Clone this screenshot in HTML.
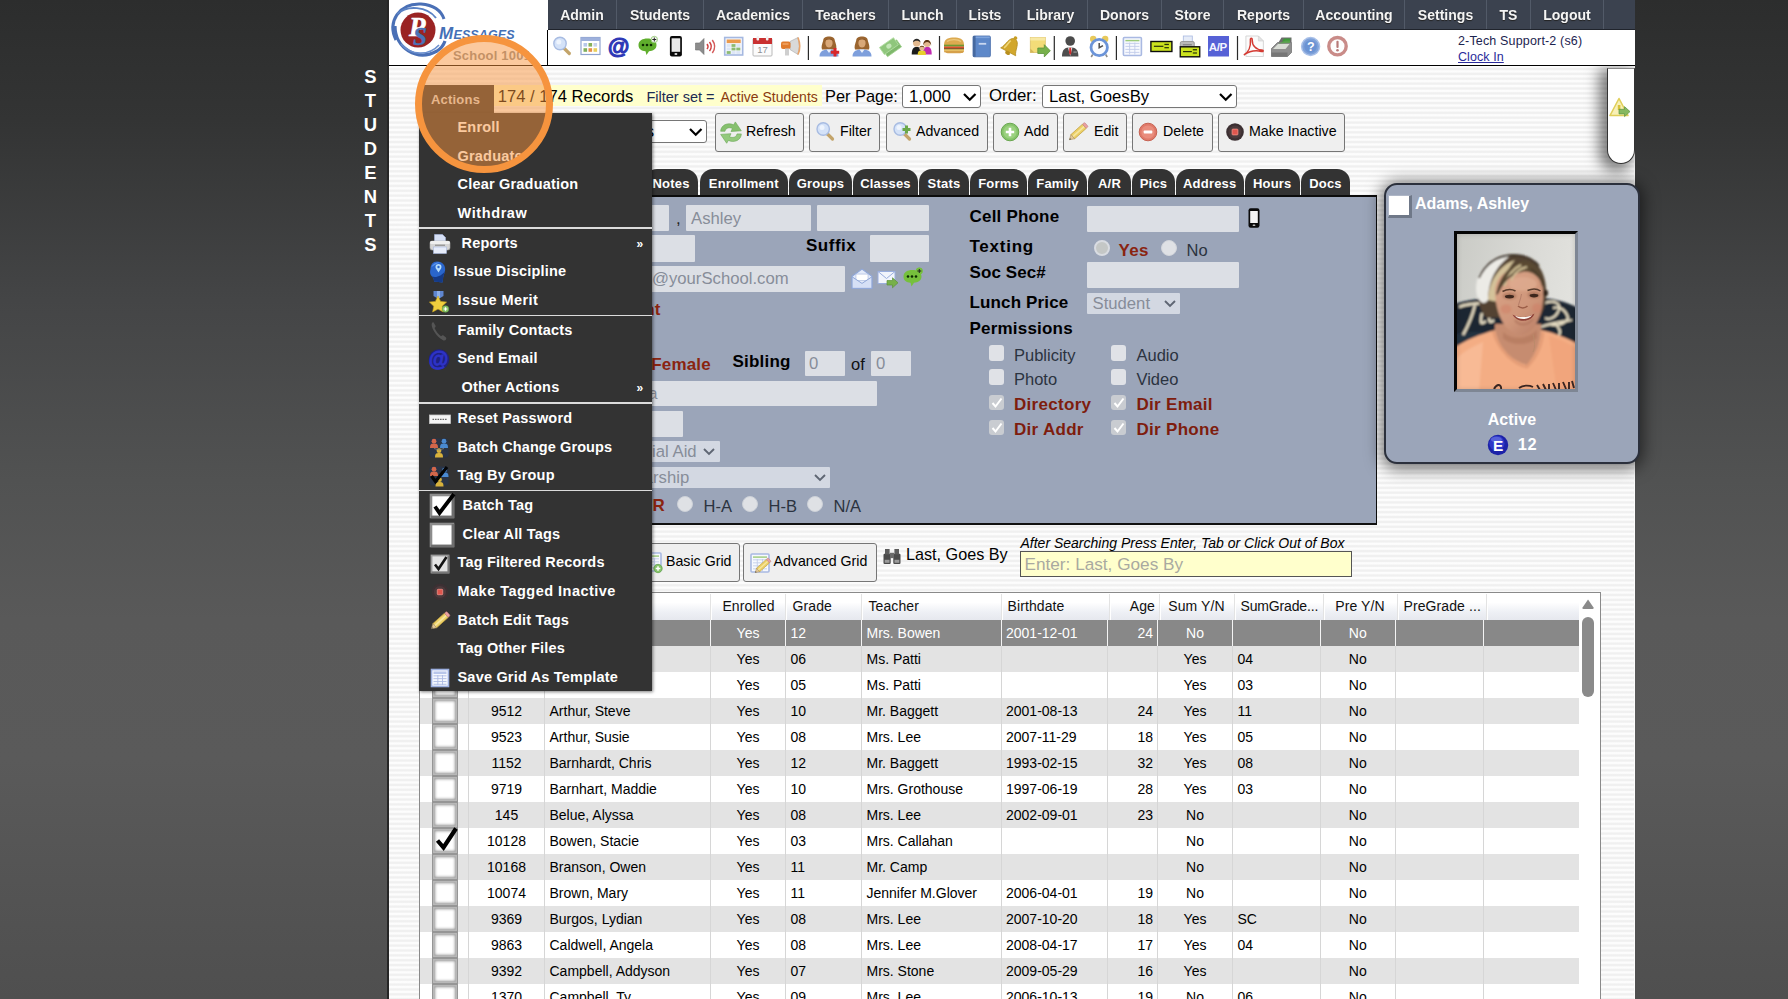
<!DOCTYPE html>
<html><head><meta charset="utf-8"><title>Students</title>
<style>
html,body{margin:0;padding:0;}
body{width:1788px;height:999px;overflow:hidden;position:relative;font-family:"Liberation Sans",sans-serif;
 background:linear-gradient(to bottom,#2c2d2d 0px,#333434 120px,#444546 300px,#515252 480px,#595959 620px,#5a5a5a 760px,#535353 900px,#4f4f4f 999px);}
.t{position:absolute;white-space:nowrap;}
.b{position:absolute;box-sizing:border-box;}
svg{position:absolute;overflow:visible;}
#content{position:absolute;left:389px;top:0;width:1245.5px;height:999px;
 background:repeating-linear-gradient(to bottom,#fdfdfd 0px,#fcfcfc 1.2px,#f0f0f0 2.4px,#f0f0f0 3.6px,#fdfdfd 4.87px) 0 66px;}
.btn{position:absolute;box-sizing:border-box;background:#efefef;border:1px solid #767676;border-radius:3px;}
.inp{position:absolute;box-sizing:border-box;background:#dcdfe5;border-radius:1px;}
.sel{position:absolute;box-sizing:border-box;background:#fff;border:1px solid #767676;border-radius:3px;}
.tab{position:absolute;top:169px;height:28px;background:#333;border-radius:13px 13px 0 0;color:#fff;font-weight:bold;font-size:13px;line-height:29px;text-align:center;white-space:nowrap;}
.mi{position:absolute;left:0;white-space:nowrap;color:#fff;font-weight:bold;font-size:14.5px;line-height:20px;}
.cb{position:absolute;box-sizing:border-box;width:26px;height:26px;background:#fff;border:1px solid #969696;box-shadow:inset 0 0 0 1.5px #b8b8b8,inset 0 0 3px 2px #8e8e8e;}
.row{position:absolute;left:420px;width:1159px;height:26px;}
.c{position:absolute;top:0;height:26px;line-height:26px;font-size:14px;white-space:nowrap;box-sizing:border-box;}
.vs{position:absolute;top:620px;width:1px;height:379px;background:#d6d6d6;}
.hs{position:absolute;top:594px;width:1px;height:26px;background:#e3e3e3;box-shadow:1px 0 0 #fff;}
</style></head><body>

<div class="b" style="left:386.5px;top:0px;width:3px;height:999px;background:#262626;"></div>
<div id="content"></div>
<div class="b" style="left:1634.2px;top:66px;width:1px;height:933px;background:#fdfdfd;"></div>
<div class="t" style="left:360.3px;top:66.5px;line-height:20px;font-size:18.4px;color:#fff;font-weight:bold;width:20px;text-align:center;">S</div>
<div class="t" style="left:360.3px;top:90.5px;line-height:20px;font-size:18.4px;color:#fff;font-weight:bold;width:20px;text-align:center;">T</div>
<div class="t" style="left:360.3px;top:114.5px;line-height:20px;font-size:18.4px;color:#fff;font-weight:bold;width:20px;text-align:center;">U</div>
<div class="t" style="left:360.3px;top:138.5px;line-height:20px;font-size:18.4px;color:#fff;font-weight:bold;width:20px;text-align:center;">D</div>
<div class="t" style="left:360.3px;top:162.5px;line-height:20px;font-size:18.4px;color:#fff;font-weight:bold;width:20px;text-align:center;">E</div>
<div class="t" style="left:360.3px;top:186.5px;line-height:20px;font-size:18.4px;color:#fff;font-weight:bold;width:20px;text-align:center;">N</div>
<div class="t" style="left:360.3px;top:210.5px;line-height:20px;font-size:18.4px;color:#fff;font-weight:bold;width:20px;text-align:center;">T</div>
<div class="t" style="left:360.3px;top:234.5px;line-height:20px;font-size:18.4px;color:#fff;font-weight:bold;width:20px;text-align:center;">S</div>
<div class="b" style="left:389px;top:0px;width:1246px;height:66px;background:#fff;border-bottom:1px solid #000;"></div>
<div class="b" style="left:547px;top:30px;width:1px;height:36px;background:#000;"></div>
<svg style="left:389px;top:0px" width="158" height="65" viewBox="0 0 158 65">
<path d="M7 40 C-2 22 10 3 32 4 C44 5 52 10 55 19" fill="none" stroke="#4a70b6" stroke-width="3"/>
<path d="M8 14 C18 5 38 6 47 18" fill="none" stroke="#5b82c4" stroke-width="2"/>
<path d="M6 26 C6 48 28 62 48 51 C53 48 55 44 56 41" fill="none" stroke="#4a70b6" stroke-width="3.2"/>
<path d="M12 44 C22 56 40 56 50 45" fill="none" stroke="#6a8fce" stroke-width="1.6"/>
<circle cx="29" cy="30" r="17.5" fill="#9a2323"/>
<text x="20" y="36" font-family="Liberation Serif" font-style="italic" font-weight="bold" font-size="27" fill="#fff" stroke="#fff" stroke-width="0.6">P</text>
<text x="24" y="44.5" font-family="Liberation Serif" font-style="italic" font-weight="bold" font-size="25" fill="#4a73b8" stroke="#4a73b8" stroke-width="0.5">S</text>
<text x="50" y="38.5" font-family="Liberation Sans" font-style="italic" font-weight="bold" font-size="17" fill="#4470b6">M</text>
<text x="64.5" y="38.5" font-family="Liberation Sans" font-style="italic" font-weight="bold" font-size="12.5" fill="#4470b6" letter-spacing="0.1">ESSAGES</text>
</svg>
<div class="t" style="left:453px;top:45.699999999999996px;line-height:20px;font-size:13px;color:#8e8e8e;font-weight:bold;letter-spacing:0.2px;">School 1001</div>
<div class="b" style="left:548px;top:0px;width:1087px;height:30px;background:#3b424f;border-bottom:1px solid #20242c;"></div>
<div class="t" style="left:548px;top:5.4px;line-height:20px;font-size:15.2px;color:#f4f4f4;font-weight:bold;width:68px;text-align:center;transform:scaleX(0.925);transform-origin:center center;text-shadow:0 1px 1px #222;">Admin</div>
<div class="b" style="left:616px;top:0px;width:1px;height:29px;background:#525a68;"></div>
<div class="t" style="left:617px;top:5.4px;line-height:20px;font-size:15.2px;color:#f4f4f4;font-weight:bold;width:86px;text-align:center;transform:scaleX(0.925);transform-origin:center center;text-shadow:0 1px 1px #222;">Students</div>
<div class="b" style="left:703px;top:0px;width:1px;height:29px;background:#525a68;"></div>
<div class="t" style="left:704px;top:5.4px;line-height:20px;font-size:15.2px;color:#f4f4f4;font-weight:bold;width:98px;text-align:center;transform:scaleX(0.925);transform-origin:center center;text-shadow:0 1px 1px #222;">Academics</div>
<div class="b" style="left:802px;top:0px;width:1px;height:29px;background:#525a68;"></div>
<div class="t" style="left:803px;top:5.4px;line-height:20px;font-size:15.2px;color:#f4f4f4;font-weight:bold;width:85px;text-align:center;transform:scaleX(0.925);transform-origin:center center;text-shadow:0 1px 1px #222;">Teachers</div>
<div class="b" style="left:888px;top:0px;width:1px;height:29px;background:#525a68;"></div>
<div class="t" style="left:889px;top:5.4px;line-height:20px;font-size:15.2px;color:#f4f4f4;font-weight:bold;width:67px;text-align:center;transform:scaleX(0.925);transform-origin:center center;text-shadow:0 1px 1px #222;">Lunch</div>
<div class="b" style="left:956px;top:0px;width:1px;height:29px;background:#525a68;"></div>
<div class="t" style="left:957px;top:5.4px;line-height:20px;font-size:15.2px;color:#f4f4f4;font-weight:bold;width:56px;text-align:center;transform:scaleX(0.925);transform-origin:center center;text-shadow:0 1px 1px #222;">Lists</div>
<div class="b" style="left:1013px;top:0px;width:1px;height:29px;background:#525a68;"></div>
<div class="t" style="left:1014px;top:5.4px;line-height:20px;font-size:15.2px;color:#f4f4f4;font-weight:bold;width:73px;text-align:center;transform:scaleX(0.925);transform-origin:center center;text-shadow:0 1px 1px #222;">Library</div>
<div class="b" style="left:1087px;top:0px;width:1px;height:29px;background:#525a68;"></div>
<div class="t" style="left:1088px;top:5.4px;line-height:20px;font-size:15.2px;color:#f4f4f4;font-weight:bold;width:73px;text-align:center;transform:scaleX(0.925);transform-origin:center center;text-shadow:0 1px 1px #222;">Donors</div>
<div class="b" style="left:1161px;top:0px;width:1px;height:29px;background:#525a68;"></div>
<div class="t" style="left:1162px;top:5.4px;line-height:20px;font-size:15.2px;color:#f4f4f4;font-weight:bold;width:61px;text-align:center;transform:scaleX(0.925);transform-origin:center center;text-shadow:0 1px 1px #222;">Store</div>
<div class="b" style="left:1223px;top:0px;width:1px;height:29px;background:#525a68;"></div>
<div class="t" style="left:1224px;top:5.4px;line-height:20px;font-size:15.2px;color:#f4f4f4;font-weight:bold;width:79px;text-align:center;transform:scaleX(0.925);transform-origin:center center;text-shadow:0 1px 1px #222;">Reports</div>
<div class="b" style="left:1303px;top:0px;width:1px;height:29px;background:#525a68;"></div>
<div class="t" style="left:1304px;top:5.4px;line-height:20px;font-size:15.2px;color:#f4f4f4;font-weight:bold;width:100px;text-align:center;transform:scaleX(0.925);transform-origin:center center;text-shadow:0 1px 1px #222;">Accounting</div>
<div class="b" style="left:1404px;top:0px;width:1px;height:29px;background:#525a68;"></div>
<div class="t" style="left:1405px;top:5.4px;line-height:20px;font-size:15.2px;color:#f4f4f4;font-weight:bold;width:81px;text-align:center;transform:scaleX(0.925);transform-origin:center center;text-shadow:0 1px 1px #222;">Settings</div>
<div class="b" style="left:1486px;top:0px;width:1px;height:29px;background:#525a68;"></div>
<div class="t" style="left:1487px;top:5.4px;line-height:20px;font-size:15.2px;color:#f4f4f4;font-weight:bold;width:43px;text-align:center;transform:scaleX(0.925);transform-origin:center center;text-shadow:0 1px 1px #222;">TS</div>
<div class="b" style="left:1530px;top:0px;width:1px;height:29px;background:#525a68;"></div>
<div class="t" style="left:1531px;top:5.4px;line-height:20px;font-size:15.2px;color:#f4f4f4;font-weight:bold;width:72px;text-align:center;transform:scaleX(0.925);transform-origin:center center;text-shadow:0 1px 1px #222;">Logout</div>
<div class="b" style="left:1603px;top:0px;width:1px;height:29px;background:#525a68;"></div>
<svg style="left:0;top:0" width="1788" height="70" viewBox="0 0 1788 70"><g transform="translate(561.8 46.5)"><line x1="2.5" y1="2" x2="7.5" y2="7" stroke="#c3a46a" stroke-width="3.2" stroke-linecap="round"/><circle cx="-1.8" cy="-3" r="6.2" fill="#d4e2f8" stroke="#a8bce2" stroke-width="1.4"/><circle cx="-3" cy="-4.5" r="2.5" fill="#eef4fd"/></g><g transform="translate(590.5 46.5)"><rect x="-9.5" y="-9" width="19" height="17" fill="#fff" stroke="#8fa3cf" stroke-width="1.2"/><rect x="-9.5" y="-9" width="19" height="3.5" fill="#9db0dc"/><rect x="-7" y="-3.5" width="3.6" height="3.6" fill="#b7c8ea"/><rect x="-2" y="-3.5" width="3.6" height="3.6" fill="#86b05a"/><rect x="3" y="-3.5" width="3.6" height="3.6" fill="#c8d2ea"/><rect x="-7" y="1.7000000000000002" width="3.6" height="3.6" fill="#7fae5c"/><rect x="-2" y="1.7000000000000002" width="3.6" height="3.6" fill="#e58f4a"/><rect x="3" y="1.7000000000000002" width="3.6" height="3.6" fill="#e8cf5a"/></g><g transform="translate(619 46.5)"><text x="-11.5" y="7.5" font-family="Liberation Sans" font-weight="bold" font-style="italic" font-size="22" fill="#2d37b6" stroke="#2d37b6" stroke-width="1.1">@</text></g><g transform="translate(648 46.5)"><path d="M-9.5 -1.5 C-9.5 -6 -5 -8 -1 -8 C5 -8 8.5 -5.5 8.5 -1.5 C8.5 2.5 5 4.5 1 4.8 L-1.5 8.5 L-2.5 4.8 C-6.5 4.5 -9.5 2.5 -9.5 -1.5 Z" fill="#5fae2c"/><circle cx="-5" cy="-1.5" r="1.3" fill="#0c2a00"/><circle cx="-1" cy="-1.5" r="1.3" fill="#0c2a00"/><circle cx="3" cy="-1.5" r="1.3" fill="#0c2a00"/><circle cx="6.3" cy="-7" r="3.2" fill="#f4f8f0" stroke="#8cc46a" stroke-width="0.8"/><path d="M6.3 -9 V-5 M4.3 -7 H8.3" stroke="#222" stroke-width="1"/></g><g transform="translate(675.9 46.5)"><rect x="-6" y="-10.5" width="12" height="20.5" rx="2" fill="#0a0a0a"/><rect x="-4.3" y="-8.2" width="8.6" height="13.5" fill="#e9e9e9"/><rect x="-1.3" y="6.6" width="2.6" height="1.8" rx="0.5" fill="#cfcfcf"/></g><g transform="translate(705.5 46.5)"><path d="M-10 -3.5 H-6 L-1.5 -8 V8 L-6 3.5 H-10 Z" fill="#8c8c8c" stroke="#6e6e6e" stroke-width="0.6"/><path d="M1.5 -2.5 Q3.5 0 1.5 2.5" fill="none" stroke="#cf4040" stroke-width="1.5"/><path d="M4 -4.5 Q7.5 0 4 4.5" fill="none" stroke="#cf4040" stroke-width="1.5"/><path d="M6.8 -6.5 Q11.5 0 6.8 6.5" fill="none" stroke="#d45a5a" stroke-width="1.5"/></g><g transform="translate(733.7 46.5)"><rect x="-9" y="-9" width="18" height="17.5" fill="#f4f7fd" stroke="#a5b8e0" stroke-width="1.6"/><rect x="-7" y="-7" width="14" height="3.6" fill="#eb9a4c"/><rect x="-7.0" y="-2.4" width="4" height="2.8" fill="#dde6f6"/><rect x="-2.2" y="-2.4" width="4" height="2.8" fill="#8dbb72"/><rect x="2.5999999999999996" y="-2.4" width="4" height="2.8" fill="#dde6f6"/><rect x="-7.0" y="1.1" width="4" height="2.8" fill="#dde6f6"/><rect x="-2.2" y="1.1" width="4" height="2.8" fill="#8dbb72"/><rect x="2.5999999999999996" y="1.1" width="4" height="2.8" fill="#8dbb72"/><rect x="-7.0" y="4.6" width="4" height="2.8" fill="#8dbb72"/><rect x="-2.2" y="4.6" width="4" height="2.8" fill="#dde6f6"/><rect x="2.5999999999999996" y="4.6" width="4" height="2.8" fill="#dde6f6"/></g><g transform="translate(762.5 46.5)"><rect x="-9.5" y="-8" width="19" height="17.5" rx="1" fill="#fbfbfb" stroke="#b9b9b9" stroke-width="1"/><rect x="-9.5" y="-8.5" width="19" height="6" fill="#c93030"/><rect x="-6" y="-10.5" width="2.6" height="4.5" rx="1" fill="#f2f2f2"/><rect x="3.4" y="-10.5" width="2.6" height="4.5" rx="1" fill="#f2f2f2"/><text x="-5.2" y="6.5" font-family="Liberation Sans" font-size="9.5" fill="#8d9096">17</text></g><g transform="translate(791 46.5)"><path d="M-1 -5 L7 -9 Q10 0 7 8 L-1 3 Z" fill="#d9d9d9" stroke="#b1b1b1" stroke-width="0.7"/><path d="M7 -9 Q10.5 0 7 8" fill="none" stroke="#e8a36a" stroke-width="1.6"/><rect x="-10" y="-5" width="9.5" height="7.5" rx="2" fill="#e07b2c"/><rect x="-6" y="2" width="4" height="7" fill="#cfcfcf"/><rect x="-8.5" y="-3.3" width="6" height="1.6" fill="#f1a262"/></g><g transform="translate(829 46.5)"><path d="M-5.8 -6 C-6 -11.5 6 -11.5 5.8 -6 C7 -2 8 0 7 3 L-7 3 C-8 0 -7 -2 -5.8 -6 Z" fill="#9b652f"/><path d="M-9.5 10 C-9.5 4 -5 3 0 3 C5 3 9.5 4 9.5 10 Z" fill="#7e9fdc"/><path d="M-2.5 3 L0 6.5 L2.5 3 Z" fill="#eef2fb"/><ellipse cx="0" cy="-3.5" rx="3.6" ry="4.6" fill="#d9a878"/><path d="M-4 -6 C-2 -9 3 -9 4.2 -5.5 C2 -7 -1 -7.5 -4 -6 Z" fill="#8a5626"/><path d="M6 1.5 V10 M1.8 5.8 H10.2" stroke="#d8262a" stroke-width="3"/></g><g transform="translate(862 46.5)"><path d="M-5.8 -6 C-6 -11.5 6 -11.5 5.8 -6 C7 -2 8 0 7 3 L-7 3 C-8 0 -7 -2 -5.8 -6 Z" fill="#9b652f"/><path d="M-9.5 10 C-9.5 4 -5 3 0 3 C5 3 9.5 4 9.5 10 Z" fill="#7e9fdc"/><path d="M-2.5 3 L0 6.5 L2.5 3 Z" fill="#eef2fb"/><ellipse cx="0" cy="-3.5" rx="3.6" ry="4.6" fill="#d9a878"/><path d="M-4 -6 C-2 -9 3 -9 4.2 -5.5 C2 -7 -1 -7.5 -4 -6 Z" fill="#8a5626"/></g><g transform="translate(890.3 46.5)"><g transform="rotate(-35) scale(0.9)"><rect x="-9" y="-2" width="19" height="9.5" fill="#7fb86c" stroke="#9fd08c" stroke-width="0.8"/><rect x="-10.5" y="-6" width="19" height="9.5" fill="#8fc67c" stroke="#b2dca2" stroke-width="0.9"/><ellipse cx="-1" cy="-1.2" rx="3" ry="2.6" fill="#c4e6b8"/></g></g><g transform="translate(921.7 46.5)"><path d="M-10 8 C-10 2 -8 0.5 -5 0.5 C-2 0.5 -0.5 2 -0.5 8 Z" fill="#1b1b1b"/><path d="M1 8 C1 2 3 0.5 5.5 0.5 C8.5 0.5 10 2 10 8 Z" fill="#c02ab0"/><circle cx="-5" cy="-3.5" r="3.7" fill="#e3b98f"/><path d="M-8.8 -4 C-8.5 -9 -1.5 -9 -1.2 -4 C-3 -6.5 -7 -6.5 -8.8 -4 Z" fill="#2a2a2a"/><circle cx="5.5" cy="-3" r="3.5" fill="#e3b98f"/><path d="M1.6 -1 C1 -8.5 9.5 -8.5 9.5 -1 C8.5 -5 3 -6 1.6 -1 Z" fill="#5a3516"/><path d="M-4 8.5 C-4 4.5 -2.5 4 0.2 4 C3 4 4.2 4.5 4.2 8.5 Z" fill="#e6cf2c"/><circle cx="0.2" cy="1.8" r="2.5" fill="#e3b98f"/><path d="M-2.3 1.4 C-2 -1.6 2.6 -1.6 2.8 1.4 C1.5 0 -1 0 -2.3 1.4 Z" fill="#6a431c"/></g><g transform="translate(954 46.5)"><path d="M-10 -1.5 C-10 -8 -5 -9 0 -9 C5 -9 10 -8 10 -1.5 Z" fill="#dcaa50"/><rect x="-10" y="-1.8" width="20" height="2" fill="#6c9a32"/><rect x="-10" y="0" width="20" height="1.8" fill="#d94f2b"/><rect x="-10" y="1.6" width="20" height="1.6" fill="#7a4a22"/><rect x="-10" y="3" width="20" height="1.2" fill="#efd24a"/><path d="M-10 4 H10 C10 7 8 6.8 0 6.8 C-8 6.8 -10 7 -10 4 Z" fill="#d6a04a"/><path d="M-7 -5 C-4 -7.5 4 -7.5 7 -5" stroke="#ecc87e" stroke-width="1.3" fill="none"/></g><g transform="translate(981.7 46.5)"><rect x="-8.7" y="-10.5" width="17.4" height="20.8" rx="1.2" fill="#5d88c9" stroke="#4469a8" stroke-width="0.8"/><rect x="-8.7" y="-10.5" width="2.6" height="20.8" fill="#46699f"/><rect x="-3" y="-3.6" width="7.5" height="1.8" fill="#c9d8f0"/><rect x="-6" y="-10" width="14" height="1.6" fill="#7ea4dc"/></g><g transform="translate(1011 46.5)"><g transform="rotate(28)"><path d="M-8.5 6 C-5 2 -6.5 -8 0 -8.5 C6.5 -8 5 2 8.5 6 Z" fill="#d2a72c" stroke="#b08a1c" stroke-width="0.7"/><circle cx="0" cy="-9.5" r="1.8" fill="#c79d24"/><ellipse cx="0" cy="7.3" rx="2.6" ry="1.8" fill="#b88f1e"/><path d="M-3 -5 C-4.5 -1 -4 2 -5.5 4.5" stroke="#f0d678" stroke-width="1.6" fill="none"/></g></g><g transform="translate(1039.8 46.5)"><rect x="-9.5" y="-9" width="15" height="15" fill="#f3dc78" stroke="#dcc06a" stroke-width="0.8"/><rect x="-9.5" y="-9" width="15" height="3" fill="#f8e9a4"/><path d="M-9.5 6 L-9.5 2 L-5.5 6 Z" fill="#d4b65a"/><path d="M-2 1.5 H4.5 V-1.8 L10.5 4.3 L4.5 10.4 V7 H-2 Z" fill="#77b04a" stroke="#5c923a" stroke-width="0.8"/></g><g transform="translate(1070.2 46.5)"><circle cx="0" cy="-5.5" r="4.8" fill="#4b4b4b"/><path d="M-8.2 10 C-8.2 2.5 -5 1 0 1 C5 1 8.2 2.5 8.2 10 Z" fill="#4e4e4e"/><path d="M-2.2 1 L0 9.5 L2.2 1 Z" fill="#f0f0f0"/><path d="M-0.9 1.3 L0.9 1.3 L1.2 6.5 L0 8.5 L-1.2 6.5 Z" fill="#d02b2b"/><rect x="3.2" y="4.8" width="3.4" height="1.6" fill="#8a8a8a"/></g><g transform="translate(1099.2 46.5)"><circle cx="-6" cy="-7.5" r="3.2" fill="#e8c95a"/><circle cx="6" cy="-7.5" r="3.2" fill="#e8c95a"/><path d="M-6.5 8 L-8 10.5 M6.5 8 L8 10.5" stroke="#8a8a8a" stroke-width="1.6"/><circle cx="0" cy="1" r="8.2" fill="#fafcff" stroke="#6b94d9" stroke-width="2.8"/><path d="M0 -3.5 V1.2 L3.8 -0.8" fill="none" stroke="#4d4d4d" stroke-width="1.5"/></g><g transform="translate(1132.4 46.5)"><rect x="-9" y="-9" width="18" height="18" rx="1" fill="#f7f9fe" stroke="#a9b9e2" stroke-width="1.6"/><rect x="-7" y="-6.6" width="14" height="1.4" fill="#9ccb7a"/><rect x="-7" y="-3.6" width="14" height="0.9" fill="#c2cdea"/><rect x="-7" y="-0.6000000000000001" width="14" height="0.9" fill="#c2cdea"/><rect x="-7" y="2.4" width="14" height="0.9" fill="#c2cdea"/><rect x="-7" y="5.4" width="14" height="0.9" fill="#c2cdea"/><rect x="-3.2" y="-4" width="0.9" height="12" fill="#c2cdea"/><rect x="2" y="-4" width="0.9" height="12" fill="#c2cdea"/></g><g transform="translate(1161.4 46.5)"><rect x="-10.5" y="-5" width="21" height="10" fill="#cbe31e" stroke="#0c0c0c" stroke-width="1.4"/><rect x="-7.5" y="-0.7999999999999998" width="9.5" height="1.2" fill="#28300a"/><rect x="3.0" y="-2.7" width="4.5" height="1.3" fill="#28300a"/><rect x="3.0" y="0.5999999999999996" width="4.5" height="1.2" fill="#28300a"/></g><g transform="translate(1189.8 46.5)"><rect x="-6.5" y="-10.5" width="9" height="7" fill="#e6ecf8" stroke="#a9b9e0" stroke-width="0.8"/><rect x="-9.5" y="-5" width="14" height="8.5" rx="1.5" fill="#b9b9b9" stroke="#8e8e8e" stroke-width="0.8"/><rect x="-7" y="-2.5" width="9" height="1.4" fill="#8a8a8a"/><g transform="translate(0.2 4.8) scale(0.93 1)"><rect x="-10.5" y="-4.5" width="21" height="10" fill="#cbe31e" stroke="#0c0c0c" stroke-width="1.4"/><rect x="-7.5" y="-0.2999999999999998" width="9.5" height="1.2" fill="#28300a"/><rect x="3.0" y="-2.2" width="4.5" height="1.3" fill="#28300a"/><rect x="3.0" y="1.0999999999999996" width="4.5" height="1.2" fill="#28300a"/></g></g><g transform="translate(1218.5 46.5)"><rect x="-10.5" y="-10.5" width="21" height="20.5" fill="#5661d6"/><text x="-9.8" y="4.8" font-family="Liberation Sans" font-weight="bold" font-size="11.5" fill="#f4f4ff" letter-spacing="-0.3">A/P</text></g><g transform="translate(1253.4 46.5)"><path d="M-7.5 -10.5 H5 L10 -5.5 V10 H-7.5 Z" fill="#fbfbfb" stroke="#d2d2d2" stroke-width="0.9"/><path d="M5 -10.5 V-5.5 H10 Z" fill="#e4e4e4" stroke="#cfcfcf" stroke-width="0.6"/><path d="M-9.5 8.5 C-5 6 -2.5 0 -3 -6.5 C-3.2 -9 -1 -9 -1.2 -6.5 C-1.5 -1 3 3.5 8.5 3.5 C10.5 3.6 10 5.5 8 5 C2 3.5 -4.5 5 -9.5 8.5 Z" fill="none" stroke="#d43a32" stroke-width="1.5"/></g><g transform="translate(1281.5 46.5)"><path d="M-10 2 L-4 -4 H10 V6 L6 10 H-10 Z" fill="#8e8e8e" stroke="#6c6c6c" stroke-width="0.7"/><path d="M-8.5 2.5 L-3.5 -2.5 H8 L4 2.5 Z" fill="#d9ddd6"/><path d="M-3 -4 L0 -9 H10 V-4 Z" fill="#6d6d6d"/><path d="M0.5 -5 L2.5 -8 H9 L8.2 -5 Z" fill="#3f9a3c"/><path d="M-3 -3 L4 -6 L8.5 -6 L8.5 -3.5 Z" fill="#57aa4a" opacity="0.8"/><rect x="-10" y="6" width="16" height="4" fill="#767676"/></g><g transform="translate(1310.6 46.5)"><circle cx="0" cy="0" r="9" fill="#7ea1d9" stroke="#a9c0e8" stroke-width="1.4"/><circle cx="0" cy="0" r="6.3" fill="#6b93d3"/><text x="-3.6" y="4.6" font-family="Liberation Sans" font-weight="bold" font-size="12.5" fill="#fff">?</text></g><g transform="translate(1337.5 46.5)"><circle cx="0" cy="-0.3" r="8.7" fill="#fdfdfd" stroke="#c98b88" stroke-width="3.4"/><rect x="-1.1" y="-5.8" width="2.2" height="7.2" rx="1" fill="#b77a78"/><circle cx="0" cy="3.8" r="1.3" fill="#b77a78"/></g><rect x="807.8" y="36" width="1.2" height="24" fill="#2a2a2a"/><rect x="938.9" y="36" width="1.2" height="24" fill="#2a2a2a"/><rect x="1053.7" y="36" width="1.2" height="24" fill="#2a2a2a"/><rect x="1115.8000000000002" y="36" width="1.2" height="24" fill="#2a2a2a"/><rect x="1236.9" y="36" width="1.2" height="24" fill="#2a2a2a"/></svg>
<div class="t" style="left:1458px;top:30.5px;line-height:20px;font-size:12.5px;color:#1c2450;letter-spacing:0.16px;">2-Tech Support-2 (s6)</div>
<div class="t" style="left:1458px;top:46.5px;line-height:20px;font-size:12.5px;color:#2a2a9a;letter-spacing:0.08px;text-decoration:underline;">Clock In</div>
<div class="b" style="left:389px;top:66px;width:1246px;height:300px;overflow:hidden;">
<div class="b" style="left:1218px;top:2px;width:28px;height:96px;background:#fff;border:1px solid #333;border-top-color:#888;border-radius:0 0 14px 14px;box-shadow:-5px 4px 14px 3px rgba(0,0,0,0.5);"></div>
</div>
<svg style="left:1609px;top:97px" width="24" height="24" viewBox="0 0 24 24"><path d="M10 1.5 L19 18.5 H1 Z" fill="#f8f0b6" stroke="#e0cf5a" stroke-width="1.6" stroke-linejoin="round"/><rect x="8.8" y="8" width="2.6" height="5" fill="#d8c23a"/><path d="M10 12.3 H15.5 V9.6 L21 14.6 L15.5 19.6 V16.9 H10 Z" fill="#86b860" stroke="#5e9440" stroke-width="0.7"/></svg><div class="b" style="left:419px;top:85px;width:402.5px;height:21px;background:#ffffcc;"></div>
<div class="b" style="left:419px;top:85px;width:75px;height:28px;background:#333;"></div>
<div class="t" style="left:431px;top:89.9px;line-height:20px;font-size:13px;color:#d9d9d9;font-weight:bold;letter-spacing:0.2px;">Actions</div>
<div class="t" style="left:497.8px;top:86.8px;line-height:20px;font-size:16.6px;color:#000;">174 / 174 Records</div>
<div class="t" style="left:646.4px;top:87.0px;line-height:20px;font-size:14.5px;color:#1c2a52;">Filter set = </div>
<div class="t" style="left:720.5px;top:87.0px;line-height:20px;font-size:14px;color:#8a3a10;">Active Students</div>
<div class="t" style="left:825px;top:86.0px;line-height:20px;font-size:16.4px;color:#000;">Per Page:</div>
<div class="sel" style="left:902px;top:85px;width:79px;height:23px;"></div>
<div class="t" style="left:909px;top:86.5px;line-height:20px;font-size:16.7px;color:#000;">1,000</div>
<svg style="left:962.2px;top:92.2px" width="15.5" height="11.5" viewBox="0 0 15.5 11.5"><path d="M2 2 L7.75 7.75 L13.5 2" fill="none" stroke="#000" stroke-width="2.2"/></svg>
<div class="t" style="left:989px;top:86.0px;line-height:20px;font-size:16.8px;color:#000;">Order:</div>
<div class="sel" style="left:1042px;top:85px;width:195px;height:23px;"></div>
<div class="t" style="left:1049px;top:86.5px;line-height:20px;font-size:16.7px;color:#000;">Last, GoesBy</div>
<svg style="left:1218.4px;top:92.4px" width="15.5" height="11.5" viewBox="0 0 15.5 11.5"><path d="M2 2 L7.75 7.75 L13.5 2" fill="none" stroke="#000" stroke-width="2.2"/></svg>
<div class="sel" style="left:560px;top:120px;width:147px;height:23px;"></div>
<div class="t" style="left:645.7px;top:121.5px;line-height:20px;font-size:16.7px;color:#000;">s</div>
<svg style="left:688.4px;top:126.8px" width="15.5" height="11.5" viewBox="0 0 15.5 11.5"><path d="M2 2 L7.75 7.75 L13.5 2" fill="none" stroke="#000" stroke-width="2.2"/></svg>
<div class="btn" style="left:715px;top:113.2px;width:89px;height:38.4px;"></div>
<svg style="left:717.2px;top:118.0px" width="28" height="28" viewBox="-14.0 -14.0 28 28"><g transform="scale(1.2)"><path d="M-8.6 -0.6 C-8.4 -6 -2.5 -8.2 2.2 -6 L3.6 -8.4 L8.6 -1 L0 -0.4 L1.2 -3 C-1.4 -4.2 -4.6 -3.4 -5 -0.6 Z" fill="#86c06e" stroke="#6aa655" stroke-width="0.5"/><path d="M-8.6 -0.6 C-8.4 -6 -2.5 -8.2 2.2 -6 L3.6 -8.4 L8.6 -1 L0 -0.4 L1.2 -3 C-1.4 -4.2 -4.6 -3.4 -5 -0.6 Z" transform="rotate(180) translate(0 -1)" fill="#93c97c" stroke="#6aa655" stroke-width="0.5"/></g></svg>
<div class="t" style="left:746px;top:121.0px;line-height:20px;font-size:14.2px;color:#000;">Refresh</div>
<div class="btn" style="left:809px;top:113.2px;width:71px;height:38.4px;"></div>
<svg style="left:811.0px;top:118.0px" width="28" height="28" viewBox="-14.0 -14.0 28 28"><line x1="2.5" y1="2" x2="7.5" y2="7" stroke="#c3a46a" stroke-width="3.2" stroke-linecap="round"/><circle cx="-1.8" cy="-3" r="6.2" fill="#d4e2f8" stroke="#a8bce2" stroke-width="1.4"/><circle cx="-3" cy="-4.5" r="2.5" fill="#eef4fd"/></svg>
<div class="t" style="left:840px;top:121.0px;line-height:20px;font-size:14.2px;color:#000;">Filter</div>
<div class="btn" style="left:886px;top:113.2px;width:102px;height:38.4px;"></div>
<svg style="left:888.0px;top:118.0px" width="28" height="28" viewBox="-14.0 -14.0 28 28"><line x1="2.5" y1="2" x2="7.5" y2="7" stroke="#c3a46a" stroke-width="3.2" stroke-linecap="round"/><circle cx="-1.8" cy="-3" r="6.2" fill="#d4e2f8" stroke="#a8bce2" stroke-width="1.4"/><circle cx="-3" cy="-4.5" r="2.5" fill="#eef4fd"/><path d="M4.5 -6.5 V1.5 M0.5 -2.5 H8.5" stroke="#6aa84a" stroke-width="3"/></svg>
<div class="t" style="left:916px;top:121.0px;line-height:20px;font-size:14.2px;color:#000;">Advanced</div>
<div class="btn" style="left:993px;top:113.2px;width:65px;height:38.4px;"></div>
<svg style="left:995.5px;top:118.0px" width="28" height="28" viewBox="-14.0 -14.0 28 28"><circle cx="0" cy="0" r="8.8" fill="#86c46a" stroke="#6aa650" stroke-width="1"/><circle cx="0" cy="0" r="6.6" fill="#9bd17f"/><path d="M0 -4.2 V4.2 M-4.2 0 H4.2" stroke="#fff" stroke-width="2.6"/></svg>
<div class="t" style="left:1024px;top:121.0px;line-height:20px;font-size:14.2px;color:#000;">Add</div>
<div class="btn" style="left:1063px;top:113.2px;width:64px;height:38.4px;"></div>
<svg style="left:1064.0px;top:118.0px" width="28" height="28" viewBox="-14.0 -14.0 28 28"><g transform="rotate(-42)"><rect x="-7" y="-2.8" width="15.5" height="5.6" fill="#ecd066" stroke="#c0a040" stroke-width="0.7"/><rect x="-7" y="-0.8" width="15.5" height="1.6" fill="#f6e6a0"/><path d="M-7 -2.8 L-11.5 0 L-7 2.8 Z" fill="#e2c79a" stroke="#b0965a" stroke-width="0.6"/><path d="M-10 -0.9 L-11.8 0 L-10 0.9 Z" fill="#555"/><rect x="8.5" y="-2.8" width="2.8" height="5.6" rx="1" fill="#e8a0a0" stroke="#c07a7a" stroke-width="0.5"/></g></svg>
<div class="t" style="left:1094px;top:121.0px;line-height:20px;font-size:14.2px;color:#000;">Edit</div>
<div class="btn" style="left:1132px;top:113.2px;width:81px;height:38.4px;"></div>
<svg style="left:1134.0px;top:118.0px" width="28" height="28" viewBox="-14.0 -14.0 28 28"><circle cx="0" cy="0" r="8.8" fill="#e07a6a" stroke="#c66252" stroke-width="1"/><circle cx="0" cy="0" r="6.6" fill="#e98d7d"/><rect x="-4.3" y="-1.4" width="8.6" height="2.8" rx="0.6" fill="#fff"/></svg>
<div class="t" style="left:1163px;top:121.0px;line-height:20px;font-size:14.2px;color:#000;">Delete</div>
<div class="btn" style="left:1218px;top:113.2px;width:127px;height:38.4px;"></div>
<svg style="left:1220.5px;top:118.0px" width="28" height="28" viewBox="-14.0 -14.0 28 28"><circle cx="0" cy="0" r="8.8" fill="#3c3033"/><circle cx="0" cy="0" r="6.5120000000000005" fill="#4b3a3c"/><rect x="-2.9040000000000004" y="-2.9040000000000004" width="5.808000000000001" height="5.808000000000001" rx="0.8" fill="#e0564e" stroke="#f09088" stroke-width="0.8"/></svg>
<div class="t" style="left:1249px;top:121.0px;line-height:20px;font-size:14.2px;color:#000;">Make Inactive</div>
<div class="tab" style="left:644px;width:54px;letter-spacing:0.2px;">Notes</div>
<div class="tab" style="left:699.5px;width:88.5px;letter-spacing:0.2px;">Enrollment</div>
<div class="tab" style="left:789px;width:63px;letter-spacing:0.2px;">Groups</div>
<div class="tab" style="left:853px;width:65px;letter-spacing:0.2px;">Classes</div>
<div class="tab" style="left:919px;width:50px;letter-spacing:0.2px;">Stats</div>
<div class="tab" style="left:970px;width:57px;letter-spacing:0.2px;">Forms</div>
<div class="tab" style="left:1028px;width:59px;letter-spacing:0.2px;">Family</div>
<div class="tab" style="left:1088px;width:43px;letter-spacing:0.2px;">A/R</div>
<div class="tab" style="left:1132px;width:43px;letter-spacing:0.2px;">Pics</div>
<div class="tab" style="left:1176px;width:67.5px;letter-spacing:0.2px;">Address</div>
<div class="tab" style="left:1244.5px;width:55.5px;letter-spacing:0.2px;">Hours</div>
<div class="tab" style="left:1301px;width:49px;letter-spacing:0.2px;">Docs</div>
<div class="b" style="left:419px;top:195px;width:958.3px;height:330px;background:#9ba5b9;border:1px solid #111;border-top:2px solid #0c0c0c;border-right:1.5px solid #0c0c0c;border-bottom:2px solid #111;"></div>
<div class="inp" style="left:560px;top:205.1px;width:109px;height:25.8px;"></div>
<div class="t" style="left:676px;top:209.0px;line-height:20px;font-size:17px;color:#222;">,</div>
<div class="inp" style="left:686.3px;top:205.1px;width:124.7px;height:25.8px;"></div>
<div class="t" style="left:691px;top:208.5px;line-height:20px;font-size:16.7px;color:#878d99;">Ashley</div>
<div class="inp" style="left:817px;top:205.1px;width:112px;height:25.8px;"></div>
<div class="inp" style="left:560px;top:235.4px;width:135px;height:26.5px;"></div>
<div class="t" style="left:806px;top:235.9px;line-height:20px;font-size:17px;color:#000;font-weight:bold;letter-spacing:0.5px;">Suffix</div>
<div class="inp" style="left:869.6px;top:235.4px;width:59.4px;height:26.5px;"></div>
<div class="inp" style="left:560px;top:265.5px;width:285px;height:26px;"></div>
<div class="t" style="left:652px;top:268.5px;line-height:20px;font-size:16.7px;color:#878d99;">@yourSchool.com</div>
<svg style="left:847.5px;top:264.8px" width="28" height="28" viewBox="-14.0 -14.0 28 28"><g transform="scale(1.1)"><path d="M-9 -2.5 L0 -9 L9 -2.5 V8.5 H-9 Z" fill="#e4ebfa" stroke="#8fa6d8" stroke-width="1"/><rect x="-5.5" y="-4.5" width="11" height="6" fill="#fff" stroke="#a8b8de" stroke-width="0.6"/><path d="M-9 -2 L0 4 L9 -2 V8.5 H-9 Z" fill="#d6e0f6" stroke="#8fa6d8" stroke-width="0.9"/></g></svg>
<svg style="left:873.5px;top:265.2px" width="28" height="28" viewBox="-14.0 -14.0 28 28"><rect x="-10" y="-7.5" width="17" height="12" fill="#f2f5fc" stroke="#9aaede" stroke-width="1"/><path d="M-10 -7.5 L-1.5 -0.5 L7 -7.5" fill="none" stroke="#9aaede" stroke-width="1"/><path d="M-1 1.5 H4.5 V-1.2 L10 3.8 L4.5 8.8 V6 H-1 Z" fill="#77b04a" stroke="#5c923a" stroke-width="0.7"/></svg>
<svg style="left:899.3px;top:263.5px" width="28" height="28" viewBox="-14.0 -14.0 28 28"><g transform="scale(1.0)"><path d="M-9.5 -1.5 C-9.5 -6 -5 -8 -1 -8 C5 -8 8.5 -5.5 8.5 -1.5 C8.5 2.5 5 4.5 1 4.8 L-1.5 8.5 L-2.5 4.8 C-6.5 4.5 -9.5 2.5 -9.5 -1.5 Z" fill="#76c03c"/><circle cx="-5" cy="-1.5" r="1.3" fill="#0c2a00"/><circle cx="-1" cy="-1.5" r="1.3" fill="#0c2a00"/><circle cx="3" cy="-1.5" r="1.3" fill="#0c2a00"/><circle cx="6.3" cy="-7" r="3.2" fill="#76c03c" stroke="#76c03c" stroke-width="0.8"/><path d="M6.3 -9 V-5 M4.3 -7 H8.3" stroke="#222" stroke-width="1"/></g></svg>
<div class="t" style="left:596px;top:300.4px;line-height:20px;font-size:17px;color:#8a2410;font-weight:bold;letter-spacing:0.2px;">Student</div>
<div class="t" style="left:651.3px;top:354.9px;line-height:20px;font-size:17px;color:#8a2410;font-weight:bold;letter-spacing:0.15px;">Female</div>
<div class="t" style="left:732.5px;top:351.9px;line-height:20px;font-size:17px;color:#000;font-weight:bold;letter-spacing:0.2px;">Sibling</div>
<div class="inp" style="left:804.5px;top:350.5px;width:40.5px;height:25.5px;"></div>
<div class="t" style="left:809px;top:354.0px;line-height:20px;font-size:16.7px;color:#878d99;">0</div>
<div class="t" style="left:851px;top:354.0px;line-height:20px;font-size:16.5px;color:#111;">of</div>
<div class="inp" style="left:871px;top:350.5px;width:40px;height:25.5px;"></div>
<div class="t" style="left:876px;top:354.0px;line-height:20px;font-size:16.7px;color:#878d99;">0</div>
<div class="inp" style="left:560px;top:380.5px;width:317px;height:25.5px;"></div>
<div class="t" style="left:591.6px;top:384.0px;line-height:20px;font-size:16.7px;color:#878d99;">Alabama</div>
<div class="inp" style="left:560px;top:410.5px;width:122.5px;height:26.5px;"></div>
<div class="inp" style="left:560px;top:440.5px;width:159.5px;height:21.5px;background:#d3d8e2;"></div>
<div class="t" style="left:602px;top:441.5px;line-height:20px;font-size:16.7px;color:#878d99;">Financial Aid</div>
<svg style="left:702px;top:446.5px" width="14" height="10" viewBox="0 0 14 10"><path d="M2 2 L7.0 7.0 L12 2" fill="none" stroke="#5f6673" stroke-width="1.9"/></svg>
<div class="inp" style="left:560px;top:466.5px;width:270px;height:21.5px;background:#d3d8e2;"></div>
<div class="t" style="left:602px;top:467.5px;line-height:20px;font-size:16.7px;color:#878d99;">Scholarship</div>
<svg style="left:813px;top:472.5px" width="14" height="10" viewBox="0 0 14 10"><path d="M2 2 L7.0 7.0 L12 2" fill="none" stroke="#5f6673" stroke-width="1.9"/></svg>
<div class="t" style="left:600px;top:495.9px;line-height:20px;font-size:17px;color:#8a2410;font-weight:bold;letter-spacing:0.2px;width:65px;text-align:right;">H/R</div>
<div class="b" style="left:677.3px;top:495.5px;width:16px;height:16px;border-radius:50%;background:#dfe1e5;border:1px solid #cdd1d8;"></div>
<div class="t" style="left:703.5px;top:496.0px;line-height:20px;font-size:16.5px;color:#2b3340;">H-A</div>
<div class="b" style="left:742.3px;top:495.5px;width:16px;height:16px;border-radius:50%;background:#dfe1e5;border:1px solid #cdd1d8;"></div>
<div class="t" style="left:768.5px;top:496.0px;line-height:20px;font-size:16.5px;color:#2b3340;">H-B</div>
<div class="b" style="left:807.4px;top:495.5px;width:16px;height:16px;border-radius:50%;background:#dfe1e5;border:1px solid #cdd1d8;"></div>
<div class="t" style="left:833.5px;top:496.0px;line-height:20px;font-size:16.5px;color:#2b3340;">N/A</div>
<div class="t" style="left:969.5px;top:206.9px;line-height:20px;font-size:17px;color:#000;font-weight:bold;letter-spacing:0.2px;">Cell Phone</div>
<div class="inp" style="left:1086.5px;top:205.5px;width:152px;height:26px;"></div>
<svg style="left:1240.0px;top:204.0px" width="28" height="28" viewBox="-14.0 -14.0 28 28"><rect x="-5.5" y="-9.8" width="11" height="19.6" rx="2.2" fill="#0a0a0a"/><rect x="-3.8" y="-7" width="7.6" height="12" fill="#f4f4f4"/><rect x="-1.3" y="6.5" width="2.6" height="1.6" rx="0.5" fill="#bbb"/></svg>
<div class="t" style="left:969.5px;top:236.9px;line-height:20px;font-size:17px;color:#000;font-weight:bold;letter-spacing:0.75px;">Texting</div>
<div class="b" style="left:1093.5px;top:239.5px;width:16px;height:16px;border-radius:50%;background:#c4c7c6;border:2px solid #d9dce2;"></div>
<div class="t" style="left:1118.5px;top:240.9px;line-height:20px;font-size:17px;color:#8a2410;font-weight:bold;letter-spacing:0.3px;">Yes</div>
<div class="b" style="left:1161px;top:239.5px;width:16px;height:16px;border-radius:50%;background:#dfe1e5;border:1px solid #d2d5db;"></div>
<div class="t" style="left:1186.5px;top:240.0px;line-height:20px;font-size:16.5px;color:#2b3340;">No</div>
<div class="t" style="left:969.5px;top:262.9px;line-height:20px;font-size:17px;color:#000;font-weight:bold;letter-spacing:0.1px;">Soc Sec#</div>
<div class="inp" style="left:1086.5px;top:262px;width:152px;height:26px;"></div>
<div class="t" style="left:969.5px;top:293.4px;line-height:20px;font-size:17px;color:#000;font-weight:bold;letter-spacing:0.15px;">Lunch Price</div>
<div class="inp" style="left:1086.5px;top:293px;width:93.5px;height:21px;background:#d3d8e2;"></div>
<div class="t" style="left:1092.5px;top:293.5px;line-height:20px;font-size:16.7px;color:#878d99;">Student</div>
<svg style="left:1162.8px;top:298.5px" width="14" height="10" viewBox="0 0 14 10"><path d="M2 2 L7.0 7.0 L12 2" fill="none" stroke="#5f6673" stroke-width="1.9"/></svg>
<div class="t" style="left:969.5px;top:318.9px;line-height:20px;font-size:17px;color:#000;font-weight:bold;letter-spacing:0.2px;">Permissions</div>
<div class="b" style="left:988.5px;top:345px;width:15.5px;height:15.5px;border-radius:3px;background:#e0e2e7;"></div>
<div class="t" style="left:1014px;top:345.0px;line-height:20px;font-size:16.5px;color:#2b3340;">Publicity</div>
<div class="b" style="left:1110.5px;top:345px;width:15.5px;height:15.5px;border-radius:3px;background:#e0e2e7;"></div>
<div class="t" style="left:1136.5px;top:345.0px;line-height:20px;font-size:16.5px;color:#2b3340;">Audio</div>
<div class="b" style="left:988.5px;top:369px;width:15.5px;height:15.5px;border-radius:3px;background:#e0e2e7;"></div>
<div class="t" style="left:1014px;top:369.0px;line-height:20px;font-size:16.5px;color:#2b3340;">Photo</div>
<div class="b" style="left:1110.5px;top:369px;width:15.5px;height:15.5px;border-radius:3px;background:#e0e2e7;"></div>
<div class="t" style="left:1136.5px;top:369.0px;line-height:20px;font-size:16.5px;color:#2b3340;">Video</div>
<div class="b" style="left:988.5px;top:394.5px;width:15.5px;height:15.5px;border-radius:3px;background:#c9ccd1;"></div>
<svg style="left:988.5px;top:394.5px" width="16" height="16" viewBox="0 0 16 16"><path d="M3.5 8 L6.5 11.5 L12.5 3.5" fill="none" stroke="#fff" stroke-width="2"/></svg>
<div class="t" style="left:1014px;top:395.4px;line-height:20px;font-size:17px;color:#7e1d0e;font-weight:bold;letter-spacing:0.3px;">Directory</div>
<div class="b" style="left:1110.5px;top:394.5px;width:15.5px;height:15.5px;border-radius:3px;background:#c9ccd1;"></div>
<svg style="left:1110.5px;top:394.5px" width="16" height="16" viewBox="0 0 16 16"><path d="M3.5 8 L6.5 11.5 L12.5 3.5" fill="none" stroke="#fff" stroke-width="2"/></svg>
<div class="t" style="left:1136.5px;top:395.4px;line-height:20px;font-size:17px;color:#7e1d0e;font-weight:bold;letter-spacing:0.3px;">Dir Email</div>
<div class="b" style="left:988.5px;top:419.5px;width:15.5px;height:15.5px;border-radius:3px;background:#c9ccd1;"></div>
<svg style="left:988.5px;top:419.5px" width="16" height="16" viewBox="0 0 16 16"><path d="M3.5 8 L6.5 11.5 L12.5 3.5" fill="none" stroke="#fff" stroke-width="2"/></svg>
<div class="t" style="left:1014px;top:420.4px;line-height:20px;font-size:17px;color:#7e1d0e;font-weight:bold;letter-spacing:0.3px;">Dir Addr</div>
<div class="b" style="left:1110.5px;top:419.5px;width:15.5px;height:15.5px;border-radius:3px;background:#c9ccd1;"></div>
<svg style="left:1110.5px;top:419.5px" width="16" height="16" viewBox="0 0 16 16"><path d="M3.5 8 L6.5 11.5 L12.5 3.5" fill="none" stroke="#fff" stroke-width="2"/></svg>
<div class="t" style="left:1136.5px;top:420.4px;line-height:20px;font-size:17px;color:#7e1d0e;font-weight:bold;letter-spacing:0.3px;">Dir Phone</div>
<div class="b" style="left:1384px;top:183px;width:256px;height:281px;background:#9ba5b9;border:2px solid #2b303c;border-radius:13px;box-shadow:0 2px 16px 3px rgba(0,0,0,0.55);"></div>
<div class="b" style="left:1387.5px;top:195px;width:24px;height:22.5px;background:#fff;border-style:solid;border-width:1px 3px 3px 1px;border-color:#aeb6c6 #6f7888 #6f7888 #aeb6c6;"></div>
<div class="t" style="left:1415px;top:193.9px;line-height:20px;font-size:16px;color:#fff;font-weight:bold;">Adams, Ashley</div>
<div class="b" style="left:1454px;top:231px;width:124px;height:161px;border:3px solid;border-color:#050505 #7e8694 #7e8694 #050505;background:#d6d6d2;overflow:hidden;">
<svg style="left:0;top:0" width="118" height="155" viewBox="0 0 118 155">
<defs>
<filter id="bl" x="-10%" y="-10%" width="120%" height="120%"><feGaussianBlur stdDeviation="1.0"/></filter>
<filter id="bl2" x="-10%" y="-10%" width="120%" height="120%"><feGaussianBlur stdDeviation="0.55"/></filter>
<filter id="bl3" x="-20%" y="-20%" width="140%" height="140%"><feGaussianBlur stdDeviation="2.2"/></filter>
<linearGradient id="bg" x1="0" x2="1" y1="0" y2="0.3"><stop offset="0" stop-color="#c9cac5"/><stop offset="0.55" stop-color="#d9d9d5"/><stop offset="1" stop-color="#e2e2de"/></linearGradient>
<linearGradient id="skin" x1="0.2" x2="0.9" y1="0" y2="1"><stop offset="0" stop-color="#d9a387"/><stop offset="0.6" stop-color="#cf967a"/><stop offset="1" stop-color="#b97f66"/></linearGradient>
</defs>
<rect x="-2" y="-2" width="122" height="160" fill="url(#bg)"/>
<g filter="url(#bl)">
<!-- dark chair / banner -->
<path d="M-3 70 C18 63 38 64 60 66 C82 62 102 64 121 74 L121 112 L-3 114 Z" fill="#1c2632"/>
<path d="M-3 100 C20 96 40 98 60 100 L60 114 L-3 114 Z" fill="#243040"/>
<!-- script lettering on banner -->
<path d="M2 73 C12 69 26 69 36 70 M18 71 C15 84 11 92 6 101 M25 79 C23 88 23 92 29 87 M33 80 C31 88 33 90 37 86" fill="none" stroke="#e4dac0" stroke-width="2.6"/>
<path d="M86 70 C96 65 106 69 101 78 C98 84 92 86 88 84 M96 74 C103 72 109 76 111 84 C107 92 98 92 92 90 M84 93 C96 88 106 88 115 86 M100 92 C104 96 104 100 100 104" fill="none" stroke="#e4dac0" stroke-width="2.3"/>
<!-- shirt -->
<path d="M-3 114 C8 106 24 100 38 96 L84 96 C98 99 110 104 121 110 L121 158 L-3 158 Z" fill="#f4ad84"/>
<path d="M-3 126 C6 118 16 112 26 108 L22 158 L-3 158 Z" fill="#f8ba95"/>
<path d="M92 102 C104 106 114 110 121 116 L121 158 L100 158 Z" fill="#f1a57b"/>
<!-- neck -->
<path d="M38 90 L84 90 C85 108 79 120 70 131 C57 128 42 116 38 96 Z" fill="#c68c70"/>
<path d="M46 98 C54 106 70 106 80 96 L80 104 C72 112 54 112 46 104 Z" fill="#b57c62" opacity="0.8"/>
<path d="M36 97 C42 118 58 131 70 133 C79 124 85 112 86 98" fill="none" stroke="#e39c76" stroke-width="2.6"/>
<!-- hair back -->
<path d="M21 62 C16 40 34 19 56 21 C76 19 91 36 89 62 C89 72 86 78 83 82 L30 84 C24 80 22 70 21 62 Z" fill="#524230"/>
<!-- headband / light hair -->
<path d="M20 62 C15 40 32 21 54 21 C43 30 32 40 31 66 C28 71 23 70 20 62 Z" fill="#ecebe6"/>
<path d="M22 44 C28 30 40 22 56 21 C66 21 76 24 82 32" fill="none" stroke="#3c3228" stroke-width="1.8"/>
<path d="M31 66 C32 46 43 31 58 26 C50 36 43 48 41 68 Z" fill="#d4c29a"/>
<!-- face -->
<path d="M38 58 C38 40 54 33 66 34 C80 34 88 46 86 66 C85 84 76 100 64 101 C50 100 39 84 38 58 Z" fill="url(#skin)"/>
<ellipse cx="66" cy="50" rx="14" ry="7" fill="#dfab90" opacity="0.8"/>
<!-- fringe -->
<path d="M39 62 C41 44 52 31 66 27 C77 27 85 35 87 52 C81 41 73 36 65 38 C54 40 46 48 39 62 Z" fill="#5a4932"/>
<path d="M47 52 C51 41 57 34 64 31 M54 46 C58 38 64 34 70 33" fill="none" stroke="#d2c096" stroke-width="2.2"/>
<path d="M40 60 C44 50 50 44 56 40" fill="none" stroke="#4a3c2c" stroke-width="2"/>
<path d="M74 35 C80 38 84 44 86 52" fill="none" stroke="#4a3c2c" stroke-width="2"/>
<!-- ear/earring -->
<ellipse cx="88.5" cy="59" rx="2.6" ry="3.2" fill="#33261e"/>
<!-- eye sockets shading -->
<ellipse cx="52.5" cy="62" rx="7" ry="3.6" fill="#a87258" opacity="0.7"/><ellipse cx="77" cy="61" rx="6.5" ry="3.4" fill="#a87258" opacity="0.7"/>
<ellipse cx="49" cy="75" rx="5.5" ry="4.5" fill="#cf8268" opacity="0.55"/><ellipse cx="80" cy="74" rx="4.8" ry="4.5" fill="#cf8268" opacity="0.55"/>
<path d="M58 86 C62 92 70 92 76 85" stroke="#b0765e" stroke-width="1.6" fill="none"/>
</g>
<g filter="url(#bl2)">
<ellipse cx="52.5" cy="62.6" rx="4.6" ry="1.9" fill="#3e281e"/><ellipse cx="77" cy="61.6" rx="4.4" ry="1.8" fill="#3e281e"/>
<path d="M45.5 57.5 C50 55 55 55 58.5 57 M70.5 56.5 C75 54.5 80 54.5 83.5 57" stroke="#5a3e2e" stroke-width="1.5" fill="none"/>
<path d="M61 72 C63.5 74.5 68 74.5 70.5 72" stroke="#9c5e48" stroke-width="1.5" fill="none"/>
<path d="M64.5 60 C63.5 66 62 69 61.5 71" stroke="#b8806a" stroke-width="1.1" fill="none"/>
<path d="M55.5 80.5 C60 84 72 84 77.5 79.5 C74.5 88.5 60 89.5 55.5 80.5 Z" fill="#8e4238"/>
<path d="M58 81.8 C62 83.6 71 83.6 75.2 81 C72 86 62 86.6 58 81.8 Z" fill="#fbf6f0"/>
<!-- necklace hint -->
<path d="M76 100 C78 108 78 114 76 118" stroke="#b98a6a" stroke-width="0.8" fill="none"/>
<!-- shirt text (bottom edge) -->
<path d="M37 155 C40 149 45 150 44 156 M62 154 C66 151 72 151 76 153 M80 151 L83 156 M86 150 L89 156 M92 150 V156 M96 149 L99 156 M102 149 V156 M106 148 L109 155 M112 148 V156 M115 147 L117 154" stroke="#3a2622" stroke-width="1.9" fill="none"/>
</g>
<rect x="-2" y="-2" width="122" height="160" fill="none" stroke="#000" stroke-opacity="0.12" stroke-width="6" filter="url(#bl3)"/>
</svg>
</div>

<div class="t" style="left:1462px;top:409.9px;line-height:20px;font-size:16px;color:#fff;font-weight:bold;letter-spacing:0.1px;width:100px;text-align:center;">Active</div>
<svg style="left:1483.5px;top:430.6px" width="28" height="28" viewBox="-14.0 -14.0 28 28"><g transform="scale(1.1)"><circle cx="0" cy="0" r="9.3" fill="#1c22a8"/><circle cx="-1" cy="-1.5" r="7" fill="#2e38c8"/><ellipse cx="-1.5" cy="-5" rx="5" ry="2.6" fill="#6a74e0" opacity="0.7"/><text x="-4.6" y="5.2" font-family="Liberation Sans" font-weight="bold" font-size="14" fill="#fff">E</text></g></svg>
<div class="t" style="left:1517.8px;top:433.9px;line-height:20px;font-size:16.4px;color:#fff;font-weight:bold;letter-spacing:0.5px;">12</div><div class="btn" style="left:600px;top:543.2px;width:139.8px;height:38.4px;"></div>
<svg style="left:637.5px;top:548.0px" width="28" height="28" viewBox="-14.0 -14.0 28 28"><rect x="-9" y="-9" width="18" height="18" rx="1" fill="#f7f9fe" stroke="#a9b9e2" stroke-width="1.6"/><rect x="-7" y="-6.6" width="14" height="1.4" fill="#9ccb7a"/><rect x="-7" y="-3.6" width="14" height="0.9" fill="#c2cdea"/><rect x="-7" y="-0.6000000000000001" width="14" height="0.9" fill="#c2cdea"/><rect x="-7" y="2.4" width="14" height="0.9" fill="#c2cdea"/><rect x="-7" y="5.4" width="14" height="0.9" fill="#c2cdea"/><rect x="-3.2" y="-4" width="0.9" height="12" fill="#c2cdea"/><rect x="2" y="-4" width="0.9" height="12" fill="#c2cdea"/><circle cx="6" cy="6.5" r="4.2" fill="#86c46a" stroke="#5f9f48" stroke-width="0.7"/><path d="M6 4.2 V8.8 M3.7 6.5 H8.3" stroke="#fff" stroke-width="1.5"/></svg>
<div class="t" style="left:666px;top:551.0px;line-height:20px;font-size:14.2px;color:#000;">Basic Grid</div>
<div class="btn" style="left:743px;top:543.2px;width:134px;height:38.4px;"></div>
<svg style="left:745.5px;top:548.5px" width="28" height="28" viewBox="-14.0 -14.0 28 28"><rect x="-9" y="-9" width="18" height="18" rx="1" fill="#f7f9fe" stroke="#a9b9e2" stroke-width="1.6"/><rect x="-7" y="-6.6" width="14" height="1.4" fill="#9ccb7a"/><rect x="-7" y="-3.6" width="14" height="0.9" fill="#c2cdea"/><rect x="-7" y="-0.6000000000000001" width="14" height="0.9" fill="#c2cdea"/><rect x="-7" y="2.4" width="14" height="0.9" fill="#c2cdea"/><rect x="-7" y="5.4" width="14" height="0.9" fill="#c2cdea"/><rect x="-3.2" y="-4" width="0.9" height="12" fill="#c2cdea"/><rect x="2" y="-4" width="0.9" height="12" fill="#c2cdea"/><g transform="translate(2.5 3) scale(0.85)"><g transform="rotate(-42)"><rect x="-7" y="-2.8" width="15.5" height="5.6" fill="#ecd066" stroke="#c0a040" stroke-width="0.7"/><rect x="-7" y="-0.8" width="15.5" height="1.6" fill="#f6e6a0"/><path d="M-7 -2.8 L-11.5 0 L-7 2.8 Z" fill="#e2c79a" stroke="#b0965a" stroke-width="0.6"/><path d="M-10 -0.9 L-11.8 0 L-10 0.9 Z" fill="#555"/><rect x="8.5" y="-2.8" width="2.8" height="5.6" rx="1" fill="#e8a0a0" stroke="#c07a7a" stroke-width="0.5"/></g></g></svg>
<div class="t" style="left:773.5px;top:551.0px;line-height:20px;font-size:14.2px;color:#000;">Advanced Grid</div>
<svg style="left:880.0px;top:543.5px" width="24" height="24" viewBox="-12.0 -12.0 24 24"><g transform="scale(1 1.08)"><rect x="-8.5" y="-2" width="7.2" height="9.5" rx="1" fill="#4a4a4a"/><rect x="1.3" y="-2" width="7.2" height="9.5" rx="1" fill="#4a4a4a"/><rect x="-7" y="-6.5" width="4.6" height="5" fill="#5c5c5c"/><rect x="2.4" y="-6.5" width="4.6" height="5" fill="#5c5c5c"/><rect x="-2" y="-3" width="4" height="5" fill="#6a6a6a"/><rect x="-7.3" y="3.5" width="4.8" height="2.8" fill="#9a9a9a"/><rect x="2.5" y="3.5" width="4.8" height="2.8" fill="#9a9a9a"/></g></svg>
<div class="t" style="left:906px;top:544.0px;line-height:20px;font-size:16.2px;color:#000;">Last, Goes By</div>
<div class="t" style="left:1020.5px;top:533.0px;line-height:20px;font-size:14px;color:#000;font-style:italic;">After Searching Press Enter, Tab or Click Out of Box</div>
<div class="b" style="left:1020px;top:551px;width:332px;height:26px;background:#ffffcc;border:1px solid #555;"></div>
<div class="t" style="left:1024.5px;top:554.0px;line-height:20px;font-size:17.2px;color:#a9a9a0;">Enter: Last, Goes By</div>
<div class="b" style="left:419px;top:592px;width:1182px;height:420px;background:#fff;border:1px solid #8a8a8a;"></div>
<div class="b" style="left:420px;top:593px;width:1159px;height:27px;background:linear-gradient(to bottom,#fff 0%,#fff 35%,#eef0f5 70%,#e6e8ee 100%);"></div>
<div class="t" style="left:711px;top:596.0px;line-height:20px;font-size:14px;color:#111;letter-spacing:0.1px;width:75px;text-align:center;">Enrolled</div>
<div class="t" style="left:792.5px;top:596.0px;line-height:20px;font-size:14px;color:#111;letter-spacing:0.1px;">Grade</div>
<div class="t" style="left:868.5px;top:596.0px;line-height:20px;font-size:14px;color:#111;letter-spacing:0.1px;">Teacher</div>
<div class="t" style="left:1007.5px;top:596.0px;line-height:20px;font-size:14px;color:#111;letter-spacing:0.1px;">Birthdate</div>
<div class="t" style="left:1109px;top:596.0px;line-height:20px;font-size:14px;color:#111;letter-spacing:0.1px;width:46px;text-align:right;">Age</div>
<div class="t" style="left:1159px;top:596.0px;line-height:20px;font-size:14px;color:#111;letter-spacing:0.1px;width:75px;text-align:center;">Sum Y/N</div>
<div class="t" style="left:1240.5px;top:596.0px;line-height:20px;font-size:14px;color:#111;letter-spacing:-0.15px;">SumGrade...</div>
<div class="t" style="left:1323px;top:596.0px;line-height:20px;font-size:14px;color:#111;letter-spacing:0.1px;width:74px;text-align:center;">Pre Y/N</div>
<div class="t" style="left:1403.5px;top:596.0px;line-height:20px;font-size:14px;color:#111;letter-spacing:0.1px;">PreGrade ...</div>
<div class="hs" style="left:468px"></div>
<div class="hs" style="left:544px"></div>
<div class="hs" style="left:710px"></div>
<div class="hs" style="left:785px"></div>
<div class="hs" style="left:861px"></div>
<div class="hs" style="left:1001px"></div>
<div class="hs" style="left:1109px"></div>
<div class="hs" style="left:1159px"></div>
<div class="hs" style="left:1234px"></div>
<div class="hs" style="left:1323px"></div>
<div class="hs" style="left:1397px"></div>
<div class="hs" style="left:1486px"></div>
<div class="row" style="top:620px;background:#888888;color:#fff;"><div class="c" style="left:290.5px;width:75.0px;text-align:center;">Yes</div><div class="c" style="left:370.5px;">12</div><div class="c" style="left:446.5px;">Mrs. Bowen</div><div class="c" style="left:586px;">2001-12-01</div><div class="c" style="left:687.5px;width:45.5px;text-align:right;">24</div><div class="c" style="left:737.5px;width:75.0px;text-align:center;">No</div><div class="c" style="left:900.5px;width:74.5px;text-align:center;">No</div><div class="cb" style="left:12px;top:0;"></div></div>
<div class="row" style="top:646px;background:#e3e3e3;color:#000;"><div class="c" style="left:290.5px;width:75.0px;text-align:center;">Yes</div><div class="c" style="left:370.5px;">06</div><div class="c" style="left:446.5px;">Ms. Patti</div><div class="c" style="left:737.5px;width:75.0px;text-align:center;">Yes</div><div class="c" style="left:817.5px;">04</div><div class="c" style="left:900.5px;width:74.5px;text-align:center;">No</div><div class="cb" style="left:12px;top:0;"></div></div>
<div class="row" style="top:672px;background:#ffffff;color:#000;"><div class="c" style="left:290.5px;width:75.0px;text-align:center;">Yes</div><div class="c" style="left:370.5px;">05</div><div class="c" style="left:446.5px;">Ms. Patti</div><div class="c" style="left:737.5px;width:75.0px;text-align:center;">Yes</div><div class="c" style="left:817.5px;">03</div><div class="c" style="left:900.5px;width:74.5px;text-align:center;">No</div><div class="cb" style="left:12px;top:0;"></div></div>
<div class="row" style="top:698px;background:#e3e3e3;color:#000;"><div class="c" style="left:48.5px;width:76.0px;text-align:center;">9512</div><div class="c" style="left:129.5px;">Arthur, Steve</div><div class="c" style="left:290.5px;width:75.0px;text-align:center;">Yes</div><div class="c" style="left:370.5px;">10</div><div class="c" style="left:446.5px;">Mr. Baggett</div><div class="c" style="left:586px;">2001-08-13</div><div class="c" style="left:687.5px;width:45.5px;text-align:right;">24</div><div class="c" style="left:737.5px;width:75.0px;text-align:center;">Yes</div><div class="c" style="left:817.5px;">11</div><div class="c" style="left:900.5px;width:74.5px;text-align:center;">No</div><div class="cb" style="left:12px;top:0;"></div></div>
<div class="row" style="top:724px;background:#ffffff;color:#000;"><div class="c" style="left:48.5px;width:76.0px;text-align:center;">9523</div><div class="c" style="left:129.5px;">Arthur, Susie</div><div class="c" style="left:290.5px;width:75.0px;text-align:center;">Yes</div><div class="c" style="left:370.5px;">08</div><div class="c" style="left:446.5px;">Mrs. Lee</div><div class="c" style="left:586px;">2007-11-29</div><div class="c" style="left:687.5px;width:45.5px;text-align:right;">18</div><div class="c" style="left:737.5px;width:75.0px;text-align:center;">Yes</div><div class="c" style="left:817.5px;">05</div><div class="c" style="left:900.5px;width:74.5px;text-align:center;">No</div><div class="cb" style="left:12px;top:0;"></div></div>
<div class="row" style="top:750px;background:#e3e3e3;color:#000;"><div class="c" style="left:48.5px;width:76.0px;text-align:center;">1152</div><div class="c" style="left:129.5px;">Barnhardt, Chris</div><div class="c" style="left:290.5px;width:75.0px;text-align:center;">Yes</div><div class="c" style="left:370.5px;">12</div><div class="c" style="left:446.5px;">Mr. Baggett</div><div class="c" style="left:586px;">1993-02-15</div><div class="c" style="left:687.5px;width:45.5px;text-align:right;">32</div><div class="c" style="left:737.5px;width:75.0px;text-align:center;">Yes</div><div class="c" style="left:817.5px;">08</div><div class="c" style="left:900.5px;width:74.5px;text-align:center;">No</div><div class="cb" style="left:12px;top:0;"></div></div>
<div class="row" style="top:776px;background:#ffffff;color:#000;"><div class="c" style="left:48.5px;width:76.0px;text-align:center;">9719</div><div class="c" style="left:129.5px;">Barnhart, Maddie</div><div class="c" style="left:290.5px;width:75.0px;text-align:center;">Yes</div><div class="c" style="left:370.5px;">10</div><div class="c" style="left:446.5px;">Mrs. Grothouse</div><div class="c" style="left:586px;">1997-06-19</div><div class="c" style="left:687.5px;width:45.5px;text-align:right;">28</div><div class="c" style="left:737.5px;width:75.0px;text-align:center;">Yes</div><div class="c" style="left:817.5px;">03</div><div class="c" style="left:900.5px;width:74.5px;text-align:center;">No</div><div class="cb" style="left:12px;top:0;"></div></div>
<div class="row" style="top:802px;background:#e3e3e3;color:#000;"><div class="c" style="left:48.5px;width:76.0px;text-align:center;">145</div><div class="c" style="left:129.5px;">Belue, Alyssa</div><div class="c" style="left:290.5px;width:75.0px;text-align:center;">Yes</div><div class="c" style="left:370.5px;">08</div><div class="c" style="left:446.5px;">Mrs. Lee</div><div class="c" style="left:586px;">2002-09-01</div><div class="c" style="left:687.5px;width:45.5px;text-align:right;">23</div><div class="c" style="left:737.5px;width:75.0px;text-align:center;">No</div><div class="c" style="left:900.5px;width:74.5px;text-align:center;">No</div><div class="cb" style="left:12px;top:0;"></div></div>
<div class="row" style="top:828px;background:#ffffff;color:#000;"><div class="c" style="left:48.5px;width:76.0px;text-align:center;">10128</div><div class="c" style="left:129.5px;">Bowen, Stacie</div><div class="c" style="left:290.5px;width:75.0px;text-align:center;">Yes</div><div class="c" style="left:370.5px;">03</div><div class="c" style="left:446.5px;">Mrs. Callahan</div><div class="c" style="left:737.5px;width:75.0px;text-align:center;">No</div><div class="c" style="left:900.5px;width:74.5px;text-align:center;">No</div><div class="cb" style="left:12px;top:0;"></div><svg style="left:12px;top:-3px" width="30" height="30" viewBox="0 0 30 30"><path d="M5.5 15.5 L11.5 22.5 L24 3.5" fill="none" stroke="#000" stroke-width="4.2"/></svg></div>
<div class="row" style="top:854px;background:#e3e3e3;color:#000;"><div class="c" style="left:48.5px;width:76.0px;text-align:center;">10168</div><div class="c" style="left:129.5px;">Branson, Owen</div><div class="c" style="left:290.5px;width:75.0px;text-align:center;">Yes</div><div class="c" style="left:370.5px;">11</div><div class="c" style="left:446.5px;">Mr. Camp</div><div class="c" style="left:737.5px;width:75.0px;text-align:center;">No</div><div class="c" style="left:900.5px;width:74.5px;text-align:center;">No</div><div class="cb" style="left:12px;top:0;"></div></div>
<div class="row" style="top:880px;background:#ffffff;color:#000;"><div class="c" style="left:48.5px;width:76.0px;text-align:center;">10074</div><div class="c" style="left:129.5px;">Brown, Mary</div><div class="c" style="left:290.5px;width:75.0px;text-align:center;">Yes</div><div class="c" style="left:370.5px;">11</div><div class="c" style="left:446.5px;">Jennifer M.Glover</div><div class="c" style="left:586px;">2006-04-01</div><div class="c" style="left:687.5px;width:45.5px;text-align:right;">19</div><div class="c" style="left:737.5px;width:75.0px;text-align:center;">No</div><div class="c" style="left:900.5px;width:74.5px;text-align:center;">No</div><div class="cb" style="left:12px;top:0;"></div></div>
<div class="row" style="top:906px;background:#e3e3e3;color:#000;"><div class="c" style="left:48.5px;width:76.0px;text-align:center;">9369</div><div class="c" style="left:129.5px;">Burgos, Lydian</div><div class="c" style="left:290.5px;width:75.0px;text-align:center;">Yes</div><div class="c" style="left:370.5px;">08</div><div class="c" style="left:446.5px;">Mrs. Lee</div><div class="c" style="left:586px;">2007-10-20</div><div class="c" style="left:687.5px;width:45.5px;text-align:right;">18</div><div class="c" style="left:737.5px;width:75.0px;text-align:center;">Yes</div><div class="c" style="left:817.5px;">SC</div><div class="c" style="left:900.5px;width:74.5px;text-align:center;">No</div><div class="cb" style="left:12px;top:0;"></div></div>
<div class="row" style="top:932px;background:#ffffff;color:#000;"><div class="c" style="left:48.5px;width:76.0px;text-align:center;">9863</div><div class="c" style="left:129.5px;">Caldwell, Angela</div><div class="c" style="left:290.5px;width:75.0px;text-align:center;">Yes</div><div class="c" style="left:370.5px;">08</div><div class="c" style="left:446.5px;">Mrs. Lee</div><div class="c" style="left:586px;">2008-04-17</div><div class="c" style="left:687.5px;width:45.5px;text-align:right;">17</div><div class="c" style="left:737.5px;width:75.0px;text-align:center;">Yes</div><div class="c" style="left:817.5px;">04</div><div class="c" style="left:900.5px;width:74.5px;text-align:center;">No</div><div class="cb" style="left:12px;top:0;"></div></div>
<div class="row" style="top:958px;background:#e3e3e3;color:#000;"><div class="c" style="left:48.5px;width:76.0px;text-align:center;">9392</div><div class="c" style="left:129.5px;">Campbell, Addyson</div><div class="c" style="left:290.5px;width:75.0px;text-align:center;">Yes</div><div class="c" style="left:370.5px;">07</div><div class="c" style="left:446.5px;">Mrs. Stone</div><div class="c" style="left:586px;">2009-05-29</div><div class="c" style="left:687.5px;width:45.5px;text-align:right;">16</div><div class="c" style="left:737.5px;width:75.0px;text-align:center;">Yes</div><div class="c" style="left:900.5px;width:74.5px;text-align:center;">No</div><div class="cb" style="left:12px;top:0;"></div></div>
<div class="row" style="top:984px;background:#ffffff;color:#000;"><div class="c" style="left:48.5px;width:76.0px;text-align:center;">1370</div><div class="c" style="left:129.5px;">Campbell, Ty</div><div class="c" style="left:290.5px;width:75.0px;text-align:center;">Yes</div><div class="c" style="left:370.5px;">09</div><div class="c" style="left:446.5px;">Mrs. Lee</div><div class="c" style="left:586px;">2006-10-13</div><div class="c" style="left:687.5px;width:45.5px;text-align:right;">19</div><div class="c" style="left:737.5px;width:75.0px;text-align:center;">No</div><div class="c" style="left:817.5px;">06</div><div class="c" style="left:900.5px;width:74.5px;text-align:center;">No</div><div class="cb" style="left:12px;top:0;"></div></div>
<div class="vs" style="left:468px"></div>
<div class="vs" style="left:544px"></div>
<div class="vs" style="left:710px"></div>
<div class="vs" style="left:785px"></div>
<div class="vs" style="left:861px"></div>
<div class="vs" style="left:1001px"></div>
<div class="vs" style="left:1107px"></div>
<div class="vs" style="left:1157px"></div>
<div class="vs" style="left:1232px"></div>
<div class="vs" style="left:1320px"></div>
<div class="vs" style="left:1395px"></div>
<div class="vs" style="left:1483px"></div>
<div class="b" style="left:710px;top:620px;width:1px;height:26px;background:#f4f4f4;"></div>
<div class="b" style="left:785px;top:620px;width:1px;height:26px;background:#f4f4f4;"></div>
<div class="b" style="left:861px;top:620px;width:1px;height:26px;background:#f4f4f4;"></div>
<div class="b" style="left:1001px;top:620px;width:1px;height:26px;background:#f4f4f4;"></div>
<div class="b" style="left:1107px;top:620px;width:1px;height:26px;background:#f4f4f4;"></div>
<div class="b" style="left:1157px;top:620px;width:1px;height:26px;background:#f4f4f4;"></div>
<div class="b" style="left:1232px;top:620px;width:1px;height:26px;background:#f4f4f4;"></div>
<div class="b" style="left:1320px;top:620px;width:1px;height:26px;background:#f4f4f4;"></div>
<div class="b" style="left:1395px;top:620px;width:1px;height:26px;background:#f4f4f4;"></div>
<div class="b" style="left:1483px;top:620px;width:1px;height:26px;background:#f4f4f4;"></div>
<svg style="left:1581px;top:598px" width="14" height="12" viewBox="0 0 14 12"><path d="M7 1.5 L12.5 9.5 Q13 11 11.5 11 H2.5 Q1 11 1.5 9.5 Z" fill="#8a8a8a"/></svg>
<div class="b" style="left:1582px;top:617px;width:12px;height:80px;background:#8a8a8a;border-radius:6px;"></div>
<div class="b" style="left:418.5px;top:113px;width:233px;height:578px;background:#333;box-shadow:1px 1px 3px rgba(0,0,0,0.5);">
<div class="mi" style="left:39.0px;top:4px;letter-spacing:0.2px;">Enroll</div>
<div class="mi" style="left:39.0px;top:33px;letter-spacing:0.2px;">Graduate</div>
<div class="mi" style="left:39.0px;top:61px;letter-spacing:0.2px;">Clear Graduation</div>
<div class="mi" style="left:39.0px;top:90px;letter-spacing:0.6px;">Withdraw</div>
<div class="b" style="left:0;top:114px;width:233px;height:1.7px;background:#dcdcdc;"></div>
<svg style="left:7.0px;top:117.0px" width="28" height="28" viewBox="-14.0 -14.0 28 28"><path d="M-5.5 -9.5 H2.5 L5.5 -6.5 V-1 H-5.5 Z" fill="#d6e0f6" stroke="#a9b9e0" stroke-width="0.6"/><rect x="-10" y="-3" width="20" height="9" rx="2.2" fill="#d4d4d4" stroke="#a9a9a9" stroke-width="0.6"/><rect x="-10" y="-3" width="20" height="3" rx="1.5" fill="#efefef"/><rect x="-6.5" y="3" width="13" height="6.5" fill="#e6ecfa" stroke="#a9b9e0" stroke-width="0.6"/><rect x="-5" y="0.6" width="10" height="1.4" fill="#9a9a9a"/></svg>
<div class="mi" style="left:43.0px;top:120px;letter-spacing:0.2px;">Reports</div>
<div class="mi" style="left:218.0px;top:119.5px;letter-spacing:0px;"><span style="font-size:12px">»</span></div>
<svg style="left:5.0px;top:145.0px" width="28" height="28" viewBox="-14.0 -14.0 28 28"><path d="M-1 -10.5 C5 -10.5 8 -6 7 -1 C6.5 2 5 4 5 7 L4.5 10.5 L-4 9.5 C-4 7 -4.5 6 -6 4.5 C-8.5 2 -8 -1 -7.5 -3 C-7.5 -7.5 -5 -10.5 -1 -10.5 Z" fill="#2a66cc"/><path d="M7 -1 C6.5 2 5 4 5 7 L4.5 10.5 L-4 9.5 C-4 7 -4.5 6 -6 4.5 C-2 6 4 4 7 -1 Z" fill="#153a86"/><path d="M-6.5 -5 C-5 -9 -1 -10 2 -9.5 C-2 -8.5 -4.5 -6 -6.5 -5 Z" fill="#5a94ec"/><path d="M0.5 -8 C3.4 -8 4.4 -4.8 2.6 -2.8 L0.5 0.4 L-1.6 -2.8 C-3.4 -4.8 -2.4 -8 0.5 -8 Z" fill="#b4dcfa"/><circle cx="0.5" cy="-5" r="1.2" fill="#2a66cc"/></svg>
<div class="mi" style="left:35.0px;top:148px;letter-spacing:0.2px;">Issue Discipline</div>
<svg style="left:6.5px;top:174.0px" width="28" height="28" viewBox="-14.0 -14.0 28 28"><path d="M-5.5 -10 H4.5 V-5 L-0.5 -2 L-5.5 -5 Z" fill="#5f86d0"/><rect x="-2" y="-10" width="3" height="7" fill="#8fb0e8"/><path d="M-1 -5 L1.6 0.4 L7.6 1.1 L3.2 5.2 L4.4 11 L-1 8.1 L-6.4 11 L-5.2 5.2 L-9.6 1.1 L-3.6 0.4 Z" fill="#f0cf3e" stroke="#caa520" stroke-width="0.6"/><circle cx="6.5" cy="8" r="3.3" fill="#8cc66c" stroke="#5f9f48" stroke-width="0.6"/><path d="M6.5 6.2 V9.8 M4.7 8 H8.3" stroke="#fff" stroke-width="1.2"/></svg>
<div class="mi" style="left:39.0px;top:177px;letter-spacing:0.47px;">Issue Merit</div>
<div class="b" style="left:0;top:201.5px;width:233px;height:1.7px;background:#dcdcdc;"></div>
<svg style="left:6.5px;top:203.5px" width="28" height="28" viewBox="-14.0 -14.0 28 28"><path d="M-7 -8 C-9 -5 -3 6 4.5 9.5 C6.5 10 8 8 7 6.5 L4.5 4.5 C3.5 4 2.5 5 2 5.3 C-0.5 3.5 -3.5 -0.5 -4.5 -3 C-3.8 -3.6 -3 -4.5 -3.6 -5.6 L-5.2 -8.2 C-5.8 -9 -6.5 -8.8 -7 -8 Z" fill="#555"/></svg>
<div class="mi" style="left:39.0px;top:207px;letter-spacing:0.2px;">Family Contacts</div>
<svg style="left:6.5px;top:232.0px" width="28" height="28" viewBox="-14.0 -14.0 28 28"><circle cx="0" cy="0.5" r="10.2" fill="#1b1e8e" opacity="0.85"/><text x="-10.5" y="7" font-family="Liberation Sans" font-weight="bold" font-style="italic" font-size="20" fill="#2e33c8" stroke="#2e33c8" stroke-width="0.8">@</text></svg>
<div class="mi" style="left:39.0px;top:235px;letter-spacing:0.2px;">Send Email</div>
<div class="mi" style="left:43.0px;top:264px;letter-spacing:0.2px;">Other Actions</div>
<div class="mi" style="left:218.0px;top:263.5px;letter-spacing:0px;"><span style="font-size:12px">»</span></div>
<div class="b" style="left:0;top:289px;width:233px;height:1.7px;background:#dcdcdc;"></div>
<svg style="left:7.0px;top:291.5px" width="28" height="28" viewBox="-14.0 -14.0 28 28"><rect x="-10.5" y="-4" width="21" height="8.5" fill="#f4f4f4" stroke="#c6c6c6" stroke-width="0.8"/><path d="M-7.5 0.3 H7.5" stroke="#666" stroke-width="1.3" stroke-dasharray="1.6 0.9"/></svg>
<div class="mi" style="left:39.0px;top:295px;letter-spacing:0.2px;">Reset Password</div>
<svg style="left:6.5px;top:320.5px" width="28" height="28" viewBox="-14.0 -14.0 28 28"><rect x="-9.5" y="-9.5" width="19" height="19" rx="3" fill="#2a3446"/><g transform="translate(-5 -4) scale(1)"><circle cx="0" cy="-2.8" r="2.4" fill="#d2664a"/><path d="M-4 4 C-4 0 -2.5 -0.5 0 -0.5 C2.5 -0.5 4 0 4 4 Z" fill="#d2664a"/></g><g transform="translate(5 -4) scale(1)"><circle cx="0" cy="-2.8" r="2.4" fill="#4a8ad2"/><path d="M-4 4 C-4 0 -2.5 -0.5 0 -0.5 C2.5 -0.5 4 0 4 4 Z" fill="#4a8ad2"/></g><g transform="translate(0 5.5) scale(1)"><circle cx="0" cy="-2.8" r="2.4" fill="#d8b23c"/><path d="M-4 4 C-4 0 -2.5 -0.5 0 -0.5 C2.5 -0.5 4 0 4 4 Z" fill="#d8b23c"/></g><path d="M-5 0.5 L0 2 L5 0.5" stroke="#888" stroke-width="0.8" fill="none"/></svg>
<div class="mi" style="left:39.0px;top:324px;letter-spacing:0.08px;">Batch Change Groups</div>
<svg style="left:6.5px;top:348.5px" width="28" height="28" viewBox="-14.0 -14.0 28 28"><rect x="-9.5" y="-9.5" width="19" height="19" rx="3" fill="#2a3446"/><g transform="translate(-5 -4) scale(1)"><circle cx="0" cy="-2.8" r="2.4" fill="#d2664a"/><path d="M-4 4 C-4 0 -2.5 -0.5 0 -0.5 C2.5 -0.5 4 0 4 4 Z" fill="#d2664a"/></g><g transform="translate(5.5 -3) scale(1)"><circle cx="0" cy="-2.8" r="2.4" fill="#4a8ad2"/><path d="M-4 4 C-4 0 -2.5 -0.5 0 -0.5 C2.5 -0.5 4 0 4 4 Z" fill="#4a8ad2"/></g><g transform="translate(0.5 6.5) scale(1)"><circle cx="0" cy="-2.8" r="2.4" fill="#d8b23c"/><path d="M-4 4 C-4 0 -2.5 -0.5 0 -0.5 C2.5 -0.5 4 0 4 4 Z" fill="#d8b23c"/></g><path d="M-7.5 0 L-3.5 5.5 L8 -9" fill="none" stroke="#050505" stroke-width="3.2"/></svg>
<div class="mi" style="left:39.0px;top:352px;letter-spacing:0.2px;">Tag By Group</div>
<div class="b" style="left:0;top:376.5px;width:233px;height:1.7px;background:#dcdcdc;"></div>
<svg style="left:7.0px;top:376.5px" width="32" height="32" viewBox="-16.0 -16.0 32 32"><rect x="-11.0" y="-11.0" width="22" height="22" fill="#fff" stroke="#8c8c8c" stroke-width="2.6"/><path d="M-11.0 11.0 H11.0 V-11.0" fill="none" stroke="#6e6e6e" stroke-width="2.6"/><path d="M-7.0 0.5 L-2.5 7.0 L12.0 -12.0" fill="none" stroke="#000" stroke-width="3.8"/></svg>
<div class="mi" style="left:44.0px;top:382px;letter-spacing:0.2px;">Batch Tag</div>
<svg style="left:7.0px;top:405.5px" width="32" height="32" viewBox="-16.0 -16.0 32 32"><rect x="-11.0" y="-11.0" width="22" height="22" fill="#fff" stroke="#8c8c8c" stroke-width="2.6"/><path d="M-11.0 11.0 H11.0 V-11.0" fill="none" stroke="#6e6e6e" stroke-width="2.6"/></svg>
<div class="mi" style="left:44.0px;top:411px;letter-spacing:0.2px;">Clear All Tags</div>
<svg style="left:7.5px;top:436.5px" width="28" height="28" viewBox="-14.0 -14.0 28 28"><rect x="-8.5" y="-8.5" width="17" height="17" fill="#e4e4e4" stroke="#9a9a9a" stroke-width="1.8"/><path d="M-8.5 8.5 H8.5 V-8.5" fill="none" stroke="#787878" stroke-width="1.8"/><path d="M-5 0.5 L-1.5 5 L6.5 -7" fill="none" stroke="#141414" stroke-width="2.6"/></svg>
<div class="mi" style="left:39.0px;top:439px;letter-spacing:0.2px;">Tag Filtered Records</div>
<svg style="left:7.0px;top:465.0px" width="28" height="28" viewBox="-14.0 -14.0 28 28"><circle cx="0" cy="0" r="8.2" fill="#3c3033"/><circle cx="0" cy="0" r="6.068" fill="#4b3a3c"/><rect x="-2.706" y="-2.706" width="5.412" height="5.412" rx="0.8" fill="#e0564e" stroke="#f09088" stroke-width="0.8"/></svg>
<div class="mi" style="left:39.0px;top:468px;letter-spacing:0.48px;">Make Tagged Inactive</div>
<svg style="left:7.0px;top:493.5px" width="28" height="28" viewBox="-14.0 -14.0 28 28"><g transform="rotate(-42)"><rect x="-7" y="-2.8" width="15.5" height="5.6" fill="#ecd066" stroke="#c0a040" stroke-width="0.7"/><rect x="-7" y="-0.8" width="15.5" height="1.6" fill="#f6e6a0"/><path d="M-7 -2.8 L-11.5 0 L-7 2.8 Z" fill="#e2c79a" stroke="#b0965a" stroke-width="0.6"/><path d="M-10 -0.9 L-11.8 0 L-10 0.9 Z" fill="#555"/><rect x="8.5" y="-2.8" width="2.8" height="5.6" rx="1" fill="#e8a0a0" stroke="#c07a7a" stroke-width="0.5"/></g></svg>
<div class="mi" style="left:39.0px;top:497px;letter-spacing:0.2px;">Batch Edit Tags</div>
<div class="mi" style="left:39.0px;top:525px;letter-spacing:0.2px;">Tag Other Files</div>
<svg style="left:7.0px;top:550.5px" width="28" height="28" viewBox="-14.0 -14.0 28 28"><rect x="-8.5" y="-8.5" width="17" height="17" fill="#f4f7fe" stroke="#9db0e0" stroke-width="1.6"/><rect x="-6.5" y="-6.5" width="13" height="2.5" fill="#b8c6ea"/><rect x="-6.5" y="-2.6" width="13" height="0.9" fill="#aebce4"/><rect x="-6.5" y="0.19999999999999973" width="13" height="0.9" fill="#aebce4"/><rect x="-6.5" y="2.9999999999999996" width="13" height="0.9" fill="#aebce4"/><rect x="-6.5" y="5.799999999999999" width="13" height="0.9" fill="#aebce4"/><rect x="-2.6" y="-3" width="0.9" height="10" fill="#aebce4"/><rect x="2" y="-3" width="0.9" height="10" fill="#aebce4"/></svg>
<div class="mi" style="left:39.0px;top:554px;letter-spacing:0.2px;">Save Grid As Template</div>
</div>
<div class="b" style="left:414.5px;top:35px;width:138px;height:138px;border-radius:50%;background:rgba(247,148,62,0.5);border:7px solid #f6943e;"></div></body></html>
